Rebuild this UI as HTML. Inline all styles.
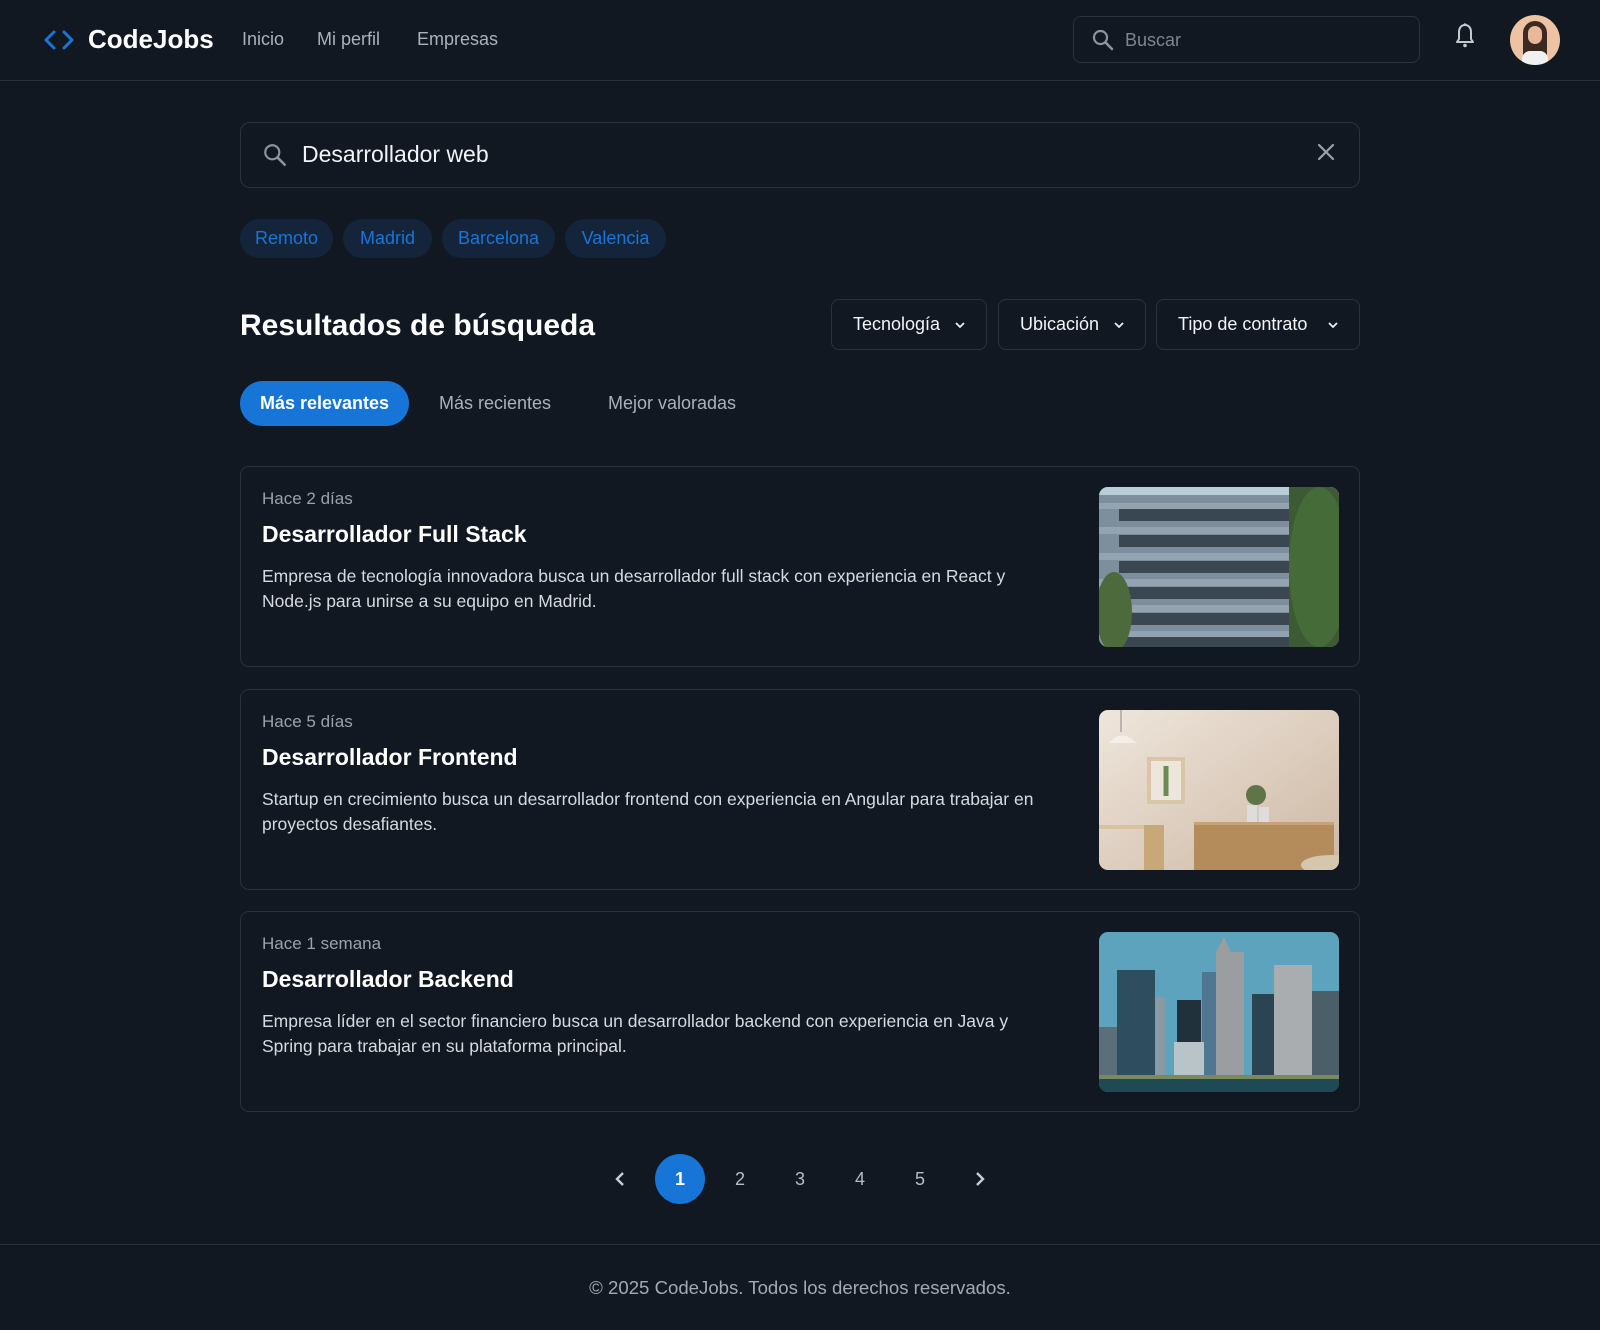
<!DOCTYPE html>
<html><head><meta charset="utf-8"><style>
*{box-sizing:border-box;margin:0;padding:0}
body{width:1600px;height:1330px;background:#111822;font-family:"Liberation Sans",sans-serif;color:#fff;position:relative;overflow:hidden}
.abs{position:absolute}
header{position:absolute;left:0;top:0;width:1600px;height:81px;border-bottom:1px solid #283039}
.nav{font-size:18px;color:#aab1bb;top:29px}
.box{border:1px solid #2a323c;border-radius:10px}
.chip{position:absolute;top:219px;height:39px;border-radius:20px;background:#14243a;color:#1b75d6;font-size:18px;line-height:39px;text-align:center}
.fbtn{position:absolute;top:299px;height:51px;border:1px solid #2a323c;border-radius:8px;font-size:18px;line-height:49px;padding-left:21px;color:#f2f4f6}
.fbtn svg{position:absolute;right:20px;top:20px}
.card{position:absolute;left:240px;width:1120px;height:201px;border:1px solid #29313b;border-radius:9px}
.card .d{position:absolute;left:21px;top:22px;font-size:17px;color:#9aa2ac}
.card .t{position:absolute;left:21px;top:54px;font-size:23px;font-weight:bold}
.card .p{position:absolute;left:21px;top:97px;width:800px;font-size:17.5px;line-height:25px;color:#d6dade}
.card .im{position:absolute;left:858px;top:20px;width:240px;height:160px;border-radius:9px;overflow:hidden}
.pg{position:absolute;top:1166px;width:50px;text-align:center;font-size:18px;color:#b6bcc4;line-height:26px}
</style></head><body>
<header>
<svg class="abs" style="left:43px;top:30px" width="32" height="20" viewBox="0 0 32 20"><path d="M11 2 L3 10 L11 18 M21 2 L29 10 L21 18" stroke="#1b75d6" stroke-width="3" fill="none" stroke-linecap="round" stroke-linejoin="round"/></svg>
<div class="abs" style="left:88px;top:24px;font-size:26px;font-weight:bold">CodeJobs</div>
<div class="abs nav" style="left:242px">Inicio</div>
<div class="abs nav" style="left:317px">Mi perfil</div>
<div class="abs nav" style="left:417px">Empresas</div>
<div class="abs box" style="left:1073px;top:16px;width:347px;height:47px;border-radius:8px"></div>
<svg class="abs" style="left:1091px;top:28px" width="24" height="24" viewBox="0 0 24 24"><circle cx="9.5" cy="9.5" r="6.5" stroke="#8d949d" stroke-width="2.2" fill="none"/><path d="M14.5 14.5 L21 21" stroke="#8d949d" stroke-width="2.6" stroke-linecap="round"/></svg>
<div class="abs" style="left:1125px;top:30px;font-size:18px;color:#7d848e">Buscar</div>
<svg class="abs" style="left:1453px;top:22px" width="24" height="28" viewBox="0 0 24 28"><path d="M12 3 C7.5 3 6 7 6 10 L6 17 L4 20 L20 20 L18 17 L18 10 C18 7 16.5 3 12 3 Z" stroke="#c4c9cf" stroke-width="2" fill="none" stroke-linejoin="round"/><circle cx="12" cy="23.5" r="1.8" fill="#c4c9cf"/><circle cx="12" cy="2.5" r="1.2" fill="#c4c9cf"/></svg>
<div class="abs" style="left:1510px;top:15px;width:50px;height:50px;border-radius:50%;background:#eec3a4;overflow:hidden">
 <div class="abs" style="left:13px;top:6px;width:24px;height:46px;border-radius:12px 12px 4px 4px;background:#3b2a22"></div>
 <div class="abs" style="left:18px;top:11px;width:14px;height:18px;border-radius:7px;background:#eab79a"></div>
 <div class="abs" style="left:12px;top:36px;width:26px;height:16px;border-radius:8px 8px 0 0;background:#f1f1f1"></div>
</div>
</header>

<div class="abs box" style="left:240px;top:122px;width:1120px;height:66px"></div>
<svg class="abs" style="left:262px;top:142px" width="26" height="26" viewBox="0 0 24 24"><circle cx="9.5" cy="9.5" r="6.5" stroke="#8d949d" stroke-width="2" fill="none"/><path d="M14.5 14.5 L21 21" stroke="#8d949d" stroke-width="2.4" stroke-linecap="round"/></svg>
<div class="abs" style="left:302px;top:141px;font-size:23px;color:#f2f4f6">Desarrollador web</div>
<svg class="abs" style="left:1316px;top:142px" width="20" height="20" viewBox="0 0 20 20"><path d="M3 3 L17 17 M17 3 L3 17" stroke="#9aa1aa" stroke-width="2.2" stroke-linecap="round"/></svg>

<div class="chip" style="left:240px;width:93px">Remoto</div>
<div class="chip" style="left:343px;width:89px">Madrid</div>
<div class="chip" style="left:442px;width:113px">Barcelona</div>
<div class="chip" style="left:565px;width:101px">Valencia</div>

<div class="abs" style="left:240px;top:309px;font-size:30px;font-weight:bold">Resultados de búsqueda</div>
<div class="fbtn" style="left:831px;width:156px">Tecnología<svg width="12" height="10" viewBox="0 0 12 10"><path d="M2 3 L6 7 L10 3" stroke="#eee" stroke-width="1.8" fill="none"/></svg></div>
<div class="fbtn" style="left:998px;width:148px">Ubicación<svg width="12" height="10" viewBox="0 0 12 10"><path d="M2 3 L6 7 L10 3" stroke="#eee" stroke-width="1.8" fill="none"/></svg></div>
<div class="fbtn" style="left:1156px;width:204px">Tipo de contrato<svg width="12" height="10" viewBox="0 0 12 10"><path d="M2 3 L6 7 L10 3" stroke="#eee" stroke-width="1.8" fill="none"/></svg></div>

<div class="abs" style="left:240px;top:381px;width:169px;height:45px;border-radius:23px;background:#1675d6;font-size:18px;line-height:45px;text-align:center;font-weight:bold;color:#fff">Más relevantes</div>
<div class="abs" style="left:439px;top:393px;font-size:18px;color:#aab1bb">Más recientes</div>
<div class="abs" style="left:608px;top:393px;font-size:18px;color:#aab1bb">Mejor valoradas</div>

<div class="card" style="top:466px">
 <div class="d">Hace 2 días</div><div class="t">Desarrollador Full Stack</div>
 <div class="p">Empresa de tecnología innovadora busca un desarrollador full stack con experiencia en React y Node.js para unirse a su equipo en Madrid.</div>
 <div class="im" style="background:#6f8290">
  <svg width="240" height="160" viewBox="0 0 240 160">
   <rect width="240" height="160" fill="#7d8f9c"/>
   <rect x="0" y="0" width="240" height="8" fill="#b9ccd8"/>
   <g fill="#3b4750"><rect x="20" y="22" width="170" height="12"/><rect x="20" y="48" width="170" height="12"/><rect x="20" y="74" width="170" height="12"/><rect x="20" y="100" width="170" height="12"/><rect x="20" y="126" width="170" height="12"/><rect x="20" y="150" width="170" height="10"/></g>
   <g fill="#93a4b0"><rect x="0" y="16" width="190" height="6"/><rect x="0" y="40" width="190" height="7"/><rect x="0" y="66" width="190" height="7"/><rect x="0" y="92" width="190" height="7"/><rect x="0" y="118" width="190" height="7"/><rect x="0" y="144" width="190" height="6"/></g>
   <rect x="190" y="0" width="50" height="160" fill="#3e5a34"/>
   <ellipse cx="220" cy="80" rx="30" ry="80" fill="#456b38"/>
   <ellipse cx="15" cy="125" rx="18" ry="40" fill="#4d6a3c"/>
  </svg>
 </div>
</div>
<div class="card" style="top:689px">
 <div class="d">Hace 5 días</div><div class="t">Desarrollador Frontend</div>
 <div class="p">Startup en crecimiento busca un desarrollador frontend con experiencia en Angular para trabajar en proyectos desafiantes.</div>
 <div class="im">
  <svg width="240" height="160" viewBox="0 0 240 160">
   <defs><linearGradient id="w" x1="0" x2="1" y1="0" y2="1"><stop offset="0" stop-color="#efe6dc"/><stop offset="1" stop-color="#cdb8a4"/></linearGradient></defs>
   <rect width="240" height="160" fill="url(#w)"/>
   <path d="M10 33 Q22 18 38 33 Z" fill="#f3efe8"/><line x1="22" y1="0" x2="22" y2="22" stroke="#888"/>
   <rect x="48" y="47" width="38" height="47" fill="#d8c6a6"/><rect x="52" y="51" width="30" height="39" fill="#ece6dc"/>
   <path d="M67 56 L67 86" stroke="#6b8a55" stroke-width="5"/>
   <rect x="95" y="112" width="140" height="48" fill="#b48c5c"/><rect x="95" y="112" width="140" height="3" fill="#c7a276"/>
   <rect x="148" y="95" width="10" height="17" fill="#ddd"/><rect x="160" y="97" width="10" height="15" fill="#ddd"/>
   <circle cx="157" cy="85" r="10" fill="#5f7448"/>
   <rect x="0" y="115" width="55" height="4" fill="#d9c29f"/><rect x="45" y="115" width="20" height="45" fill="#c9a877"/>
   <ellipse cx="232" cy="155" rx="30" ry="10" fill="#d6c6ad"/>
  </svg>
 </div>
</div>
<div class="card" style="top:911px">
 <div class="d">Hace 1 semana</div><div class="t">Desarrollador Backend</div>
 <div class="p">Empresa líder en el sector financiero busca un desarrollador backend con experiencia en Java y Spring para trabajar en su plataforma principal.</div>
 <div class="im">
  <svg width="240" height="160" viewBox="0 0 240 160">
   <rect width="240" height="160" fill="#5ea3bd"/>
   <rect x="18" y="38" width="38" height="105" fill="#2e4d5e"/>
   <rect x="56" y="65" width="10" height="80" fill="#8a9aa3"/>
   <rect x="78" y="68" width="24" height="80" fill="#20313c"/>
   <rect x="103" y="40" width="14" height="105" fill="#4f7791"/>
   <path d="M117 20 L125 5 L132 20 L145 20 L145 145 L117 145 Z" fill="#9a9ea0"/>
   <rect x="153" y="62" width="22" height="85" fill="#2b4453"/>
   <rect x="175" y="33" width="38" height="115" fill="#a9adaf"/>
   <rect x="213" y="59" width="27" height="90" fill="#4c5e68"/>
   <rect x="0" y="95" width="18" height="50" fill="#5a6f7a"/>
   <rect x="75" y="110" width="30" height="35" fill="#b9c4c8"/>
   <rect x="0" y="143" width="240" height="4" fill="#7b8a5c"/>
   <rect x="0" y="147" width="240" height="13" fill="#1e4a56"/>
  </svg>
 </div>
</div>

<svg class="abs" style="left:612px;top:1170px" width="16" height="18" viewBox="0 0 16 18"><path d="M11 3 L5 9 L11 15" stroke="#c9ced4" stroke-width="2.4" fill="none"/></svg>
<div class="abs" style="left:655px;top:1154px;width:50px;height:50px;border-radius:50%;background:#1675d6"></div>
<div class="pg" style="left:655px;color:#fff;font-weight:bold">1</div>
<div class="pg" style="left:715px">2</div>
<div class="pg" style="left:775px">3</div>
<div class="pg" style="left:835px">4</div>
<div class="pg" style="left:895px">5</div>
<svg class="abs" style="left:972px;top:1170px" width="16" height="18" viewBox="0 0 16 18"><path d="M5 3 L11 9 L5 15" stroke="#c9ced4" stroke-width="2.4" fill="none"/></svg>

<div class="abs" style="left:0;top:1244px;width:1600px;height:1px;background:#283039"></div>
<div class="abs" style="left:0;top:1277px;width:1600px;text-align:center;font-size:18.6px;color:#a3aab3">© 2025 CodeJobs. Todos los derechos reservados.</div>
</body></html>
